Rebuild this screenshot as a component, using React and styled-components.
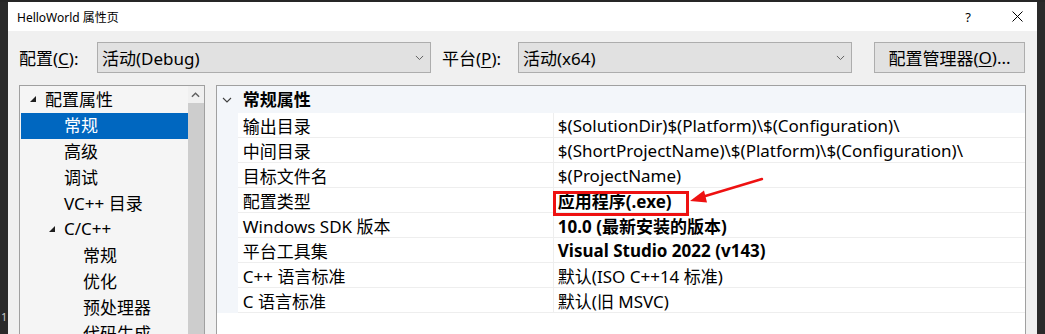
import React from 'react';
import styled, { createGlobalStyle } from 'styled-components';

const GlobalStyle = createGlobalStyle`
  html, body {
    margin: 0;
    padding: 0;
    background: #1e1e1e;
  }
  body {
    font-family: "Noto Sans", "Noto Sans CJK SC", sans-serif;
    color: #000;
  }
`;

const Screen = styled.div`
  width: 1045px;
  height: 334px;
  overflow: hidden;
  display: flex;
  background: #262626;
  padding-top: 2px;
  box-sizing: border-box;
`;

const Edge = styled.div`
  width: ${(props) => props.w}px;
  flex-shrink: 0;
  background: #2a2a2a;
  display: flex;
  flex-direction: column;
  justify-content: flex-end;
  padding: 0 0 12px 1px;
  color: #c8c8c8;
  font-size: 11px;
  line-height: 1;
  box-sizing: border-box;
`;

const Window = styled.div`
  flex: 1;
  display: flex;
  flex-direction: column;
  background: #f0f0f0;
  min-width: 0;
`;

const TitleBar = styled.div`
  height: 29px;
  flex-shrink: 0;
  background: #fff;
  display: flex;
  align-items: center;
  padding: 0 7px 0 9px;
  font-size: 12px;
`;

const Title = styled.div`
  flex: 1;
`;

const TitleButton = styled.div`
  width: ${(props) => props.w}px;
  margin-left: ${(props) => props.gap || 0}px;
  display: flex;
  justify-content: center;
  align-items: center;
  font-size: 13px;
`;

const Body = styled.div`
  flex: 1;
  display: flex;
  flex-direction: column;
  padding: 11px 11px 0 11px;
  gap: 12px;
  min-height: 0;
`;

const ConfigRow = styled.div`
  display: flex;
  align-items: center;
  height: 31px;
  font-size: 17px;
`;

const FieldLabel = styled.div`
  width: ${(props) => props.w}px;
  flex-shrink: 0;
  white-space: nowrap;
`;

const Combo = styled.div`
  width: ${(props) => props.w}px;
  height: 31px;
  box-sizing: border-box;
  border: 1px solid #adadad;
  background: #e1e1e1;
  display: flex;
  align-items: center;
  padding: 0 6px 0 4px;
  flex-shrink: 0;
`;

const ComboText = styled.div`
  flex: 1;
`;

const Spacer = styled.div`
  width: ${(props) => props.w}px;
  flex-shrink: 0;
`;

const Button = styled.div`
  width: 151px;
  height: 31px;
  box-sizing: border-box;
  border: 1px solid #adadad;
  background: #e1e1e1;
  display: flex;
  align-items: center;
  justify-content: center;
  white-space: nowrap;
`;

const Key = styled.span`
  text-decoration: underline;
  text-underline-offset: 2px;
`;

const Panels = styled.div`
  flex: 1;
  display: flex;
  gap: 11px;
  min-height: 0;
`;

const TreePanel = styled.div`
  width: 186px;
  box-sizing: border-box;
  border: 1px solid #a0a0a0;
  border-bottom: none;
  background: #f5f5f5;
  display: flex;
`;

const TreeList = styled.div`
  flex: 1;
  padding: 1px 0 0 1px;
  font-size: 17px;
`;

const TreeItem = styled.div`
  height: 26px;
  box-sizing: border-box;
  padding-bottom: 3px;
  display: flex;
  align-items: center;
  padding-left: ${(props) => 24 + props.level * 19}px;
  position: relative;
  background: ${(props) => (props.selected ? '#0067c0' : 'transparent')};
  color: ${(props) => (props.selected ? '#fff' : '#000')};
  white-space: nowrap;
`;

const Expander = styled.svg`
  position: absolute;
  left: ${(props) => 9 + props.level * 19}px;
  top: 9px;
`;

const ScrollBar = styled.div`
  width: 16px;
  flex-shrink: 0;
  display: flex;
  flex-direction: column;
  background: #f0f0f0;
`;

const ScrollButton = styled.div`
  height: 17px;
  display: flex;
  align-items: center;
  justify-content: center;
`;

const ScrollThumb = styled.div`
  flex: 1;
  background: #cdcdcd;
`;

const GridPanel = styled.div`
  width: 811px;
  box-sizing: border-box;
  border: 1px solid #a0a0a0;
  border-bottom: none;
  background: #fff;
  position: relative;
  font-size: 17px;
`;

const GroupHeader = styled.div`
  height: 27px;
  background: #f3f6fa;
  display: flex;
  align-items: center;
  font-weight: 700;
`;

const Gutter = styled.div`
  width: 21px;
  align-self: stretch;
  flex-shrink: 0;
  display: flex;
  align-items: center;
  justify-content: center;
  background: #f3f6fa;
`;

const GroupTitle = styled.div`
  padding-left: 5px;
  padding-bottom: 2px;
`;

const PropRow = styled.div`
  height: 25px;
  display: flex;
  align-items: center;
  box-sizing: border-box;
  border-bottom: 1px solid #eeeeee;
`;

const RowGutter = styled(Gutter)`
  margin-bottom: -1px;
  height: 25px;
`;

const PropName = styled.div`
  width: 316px;
  flex-shrink: 0;
  padding-left: 5px;
  box-sizing: border-box;
  align-self: stretch;
  display: flex;
  align-items: center;
  border-right: 1px solid #eeeeee;
  white-space: nowrap;
`;

const PropValue = styled.div`
  flex: 1;
  padding-left: 4px;
  font-weight: ${(props) => (props.bold ? 700 : 400)};
  white-space: nowrap;
`;

const HighlightBox = styled.div`
  position: absolute;
  left: 336px;
  top: 105px;
  width: 136px;
  height: 25px;
  box-sizing: border-box;
  border: 3px solid #ee1111;
  pointer-events: none;
`;

const ArrowMark = styled.svg`
  position: absolute;
  left: 470px;
  top: 90px;
`;

const ChevronDown = ({ size = 9, color = '#606060' }) => (
  <svg width={size} height={size / 2 + 1} viewBox="0 0 10 6">
    <path d="M1 1 L5 5 L9 1" fill="none" stroke={color} strokeWidth="1.1" />
  </svg>
);

const tree = [
  { label: '配置属性', level: 0, open: true },
  { label: '常规', level: 1, selected: true },
  { label: '高级', level: 1 },
  { label: '调试', level: 1 },
  { label: 'VC++ 目录', level: 1 },
  { label: 'C/C++', level: 1, open: true },
  { label: '常规', level: 2 },
  { label: '优化', level: 2 },
  { label: '预处理器', level: 2 },
  { label: '代码生成', level: 2 },
];

const props = [
  { name: '输出目录', value: '$(SolutionDir)$(Platform)\\$(Configuration)\\' },
  { name: '中间目录', value: '$(ShortProjectName)\\$(Platform)\\$(Configuration)\\' },
  { name: '目标文件名', value: '$(ProjectName)' },
  { name: '配置类型', value: '应用程序(.exe)', bold: true },
  { name: 'Windows SDK 版本', value: '10.0 (最新安装的版本)', bold: true },
  { name: '平台工具集', value: 'Visual Studio 2022 (v143)', bold: true },
  { name: 'C++ 语言标准', value: '默认(ISO C++14 标准)' },
  { name: 'C 语言标准', value: '默认(旧 MSVC)' },
];

export default function App() {
  return (
    <>
      <GlobalStyle />
      <Screen>
        <Edge w={8}>1</Edge>
        <Window>
          <TitleBar>
            <Title>HelloWorld 属性页</Title>
            <TitleButton w={20}>?</TitleButton>
            <TitleButton w={26} gap={26}>
              <svg width="11" height="11" viewBox="0 0 11 11">
                <path d="M0.5 0.5 L10.5 10.5 M10.5 0.5 L0.5 10.5" stroke="#000" strokeWidth="1" />
              </svg>
            </TitleButton>
          </TitleBar>
          <Body>
            <ConfigRow>
              <FieldLabel w={78}>配置(<Key>C</Key>):</FieldLabel>
              <Combo w={334}>
                <ComboText>活动(Debug)</ComboText>
                <ChevronDown />
              </Combo>
              <Spacer w={11} />
              <FieldLabel w={76}>平台(<Key>P</Key>):</FieldLabel>
              <Combo w={334}>
                <ComboText>活动(x64)</ComboText>
                <ChevronDown />
              </Combo>
              <Spacer w={22} />
              <Button>配置管理器(<Key>O</Key>)...</Button>
            </ConfigRow>
            <Panels>
              <TreePanel>
                <TreeList>
                  {tree.map((item, i) => (
                    <TreeItem key={i} level={item.level} selected={item.selected}>
                      {item.open && (
                        <Expander level={item.level} width="6" height="6" viewBox="0 0 6 6">
                          <path d="M6 0 L6 6 L0 6 Z" fill="#1e1e1e" />
                        </Expander>
                      )}
                      {item.label}
                    </TreeItem>
                  ))}
                </TreeList>
                <ScrollBar>
                  <ScrollButton>
                    <svg width="9" height="6" viewBox="0 0 10 6">
                      <path d="M1 5 L5 1 L9 5" fill="none" stroke="#606060" strokeWidth="1.6" />
                    </svg>
                  </ScrollButton>
                  <ScrollThumb />
                </ScrollBar>
              </TreePanel>
              <GridPanel>
                <GroupHeader>
                  <Gutter>
                    <ChevronDown size={10} color="#404040" />
                  </Gutter>
                  <GroupTitle>常规属性</GroupTitle>
                </GroupHeader>
                {props.map((p, i) => (
                  <PropRow key={i}>
                    <RowGutter />
                    <PropName>{p.name}</PropName>
                    <PropValue bold={p.bold}>{p.value}</PropValue>
                  </PropRow>
                ))}
                <HighlightBox />
                <ArrowMark width="80" height="30" viewBox="0 0 80 30">
                  <path d="M75 3 L15 21" stroke="#ee1111" strokeWidth="2.4" strokeLinecap="round" />
                  <path d="M3 25 L17 14.5 L20 26.5 Z" fill="#ee1111" />
                </ArrowMark>
              </GridPanel>
            </Panels>
          </Body>
        </Window>
        <Edge w={8} />
      </Screen>
    </>
  );
}
